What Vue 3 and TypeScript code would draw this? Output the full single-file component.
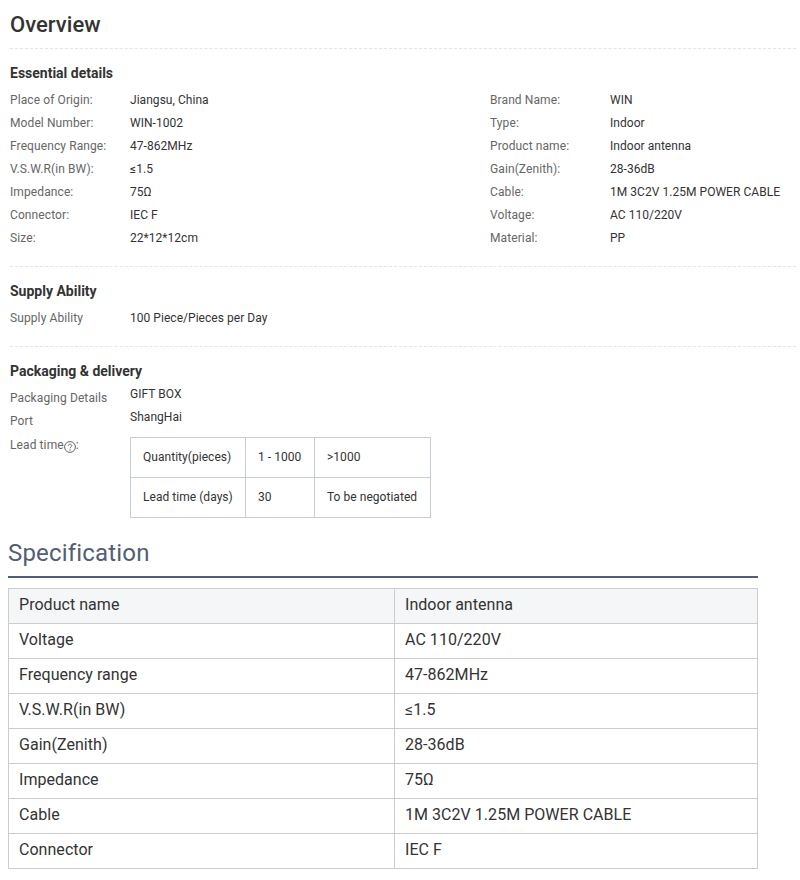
<script setup lang="ts">
const left: [string, string][] = [
  ['Place of Origin:', 'Jiangsu, China'],
  ['Model Number:', 'WIN-1002'],
  ['Frequency Range:', '47-862MHz'],
  ['V.S.W.R(in BW):', '≤1.5'],
  ['Impedance:', '75Ω'],
  ['Connector:', 'IEC F'],
  ['Size:', '22*12*12cm'],
]
const right: [string, string][] = [
  ['Brand Name:', 'WIN'],
  ['Type:', 'Indoor'],
  ['Product name:', 'Indoor antenna'],
  ['Gain(Zenith):', '28-36dB'],
  ['Cable:', '1M 3C2V 1.25M POWER CABLE'],
  ['Voltage:', 'AC 110/220V'],
  ['Material:', 'PP'],
]
const spec: [string, string][] = [
  ['Product name', 'Indoor antenna'],
  ['Voltage', 'AC 110/220V'],
  ['Frequency range', '47-862MHz'],
  ['V.S.W.R(in BW)', '≤1.5'],
  ['Gain(Zenith)', '28-36dB'],
  ['Impedance', '75Ω'],
  ['Cable', '1M 3C2V 1.25M POWER CABLE'],
  ['Connector', 'IEC F'],
]
</script>

<template>
  <div class="page">
    <section class="overview">
      <h2 class="title">Overview</h2>

      <div class="block essential">
        <h3 class="subtitle">Essential details</h3>
        <div class="columns">
          <div v-for="(col, i) in [left, right]" :key="i" class="col">
            <div v-for="row in col" :key="row[0]" class="row">
              <span class="label">{{ row[0] }}</span>
              <span class="value">{{ row[1] }}</span>
            </div>
          </div>
        </div>
      </div>

      <div class="block supply">
        <h3 class="subtitle">Supply Ability</h3>
        <div class="row">
          <span class="label">Supply Ability</span>
          <span class="value">100 Piece/Pieces per Day</span>
        </div>
      </div>

      <div class="packaging">
        <h3 class="subtitle">Packaging &amp; delivery</h3>
        <div class="row pack-row">
          <span class="label shifted">Packaging Details</span>
          <span class="value">GIFT BOX</span>
        </div>
        <div class="row pack-row">
          <span class="label shifted">Port</span>
          <span class="value">ShangHai</span>
        </div>
        <div class="lead">
          <span class="label lead-label">Lead time<svg class="help" viewBox="0 0 12 12" width="12" height="12"><circle cx="6" cy="6" r="5.4" fill="none" stroke="#666" stroke-width="1"/><path d="M4.3 4.8c0-1 .8-1.6 1.7-1.6s1.7.6 1.7 1.5c0 1.2-1.7 1.2-1.7 2.6" fill="none" stroke="#666" stroke-width="1"/><circle cx="6" cy="9" r=".7" fill="#666"/></svg>:</span>
          <table class="lead-table">
            <colgroup>
              <col class="c1" />
              <col class="c2" />
              <col class="c3" />
            </colgroup>
            <tbody>
              <tr>
                <td>Quantity(pieces)</td>
                <td>1 - 1000</td>
                <td>&gt;1000</td>
              </tr>
              <tr>
                <td>Lead time (days)</td>
                <td>30</td>
                <td>To be negotiated</td>
              </tr>
            </tbody>
          </table>
        </div>
      </div>
    </section>

    <section class="specification">
      <h2 class="spec-title">Specification</h2>
      <table class="spec-table">
        <tbody>
          <tr v-for="(row, i) in spec" :key="row[0]" :class="{ head: i === 0 }">
            <td>{{ row[0] }}</td>
            <td>{{ row[1] }}</td>
          </tr>
        </tbody>
      </table>
    </section>
  </div>
</template>

<style>
html, body { margin: 0; background: #fff; }
</style>

<style scoped>
.page {
  width: 800px;
  height: 880px;
  overflow: hidden;
  font-family: Roboto, "Liberation Sans", sans-serif;
  font-size: 12px;
  letter-spacing: 0.04px;
  color: #333;
  box-sizing: border-box;
}
.overview { padding: 0 4px 0 10px; }
.title {
  margin: 0;
  height: 48px;
  line-height: 50px;
  font-size: 22px;
  font-weight: 500;
  color: #333;
  border-bottom: 1px dashed #e4e4e4;
}
.block { border-bottom: 1px dashed #e4e4e4; }
.subtitle {
  margin: 0;
  font-size: 14px;
  font-weight: 700;
  letter-spacing: 0;
  line-height: 20px;
  color: #333;
}
.essential { padding-top: 14px; height: 218px; box-sizing: border-box; }
.essential .subtitle { margin-bottom: 6px; }
.columns { display: flex; }
.col { width: 480px; flex: none; }
.row { display: flex; line-height: 23px; height: 23px; }
.label { width: 120px; flex: none; color: #666; letter-spacing: 0.1px; }
.value { color: #333; }
.supply { padding-top: 14px; height: 80px; box-sizing: border-box; }
.supply .subtitle { margin-bottom: 6px; }
.packaging { padding-top: 14px; }
.pack-row .label { position: relative; top: 4px; }
.packaging .subtitle { margin-bottom: 2px; }
.lead { display: flex; margin-top: 8px; }
.lead-label { display: flex; align-items: center; height: 16px; }
.help { margin-top: 4px; flex: none; }
.lead-table {
  border-collapse: collapse;
  table-layout: fixed;
  width: 300px;
  color: #333;
}
.c1 { width: 115px; }
.c2 { width: 69px; }
.c3 { width: 116px; }
.lead-table td {
  border: 1px solid #c6ccda;
  height: 40px;
  padding: 0 12px 2px;
  box-sizing: border-box;
  white-space: nowrap;
}
.specification { padding-left: 8px; width: 750px; margin-top: 23px; }
.spec-title {
  margin: 0;
  height: 24px;
  padding-bottom: 11px;
  line-height: 24px;
  font-size: 24px;
  letter-spacing: 0.18px;
  font-weight: 400;
  color: #515e75;
  border-bottom: 2px solid #515e75;
}
.spec-table {
  width: 750px;
  margin-top: 10px;
  border-collapse: collapse;
  table-layout: fixed;
  font-size: 16px;
  color: #333;
}
.spec-table td {
  border: 1px solid #ccc;
  height: 35px;
  padding: 0 10px 3px;
  box-sizing: border-box;
}
.spec-table td:first-child { width: 386px; }
.spec-table tr.head td { background: #f5f6f8; }
</style>
